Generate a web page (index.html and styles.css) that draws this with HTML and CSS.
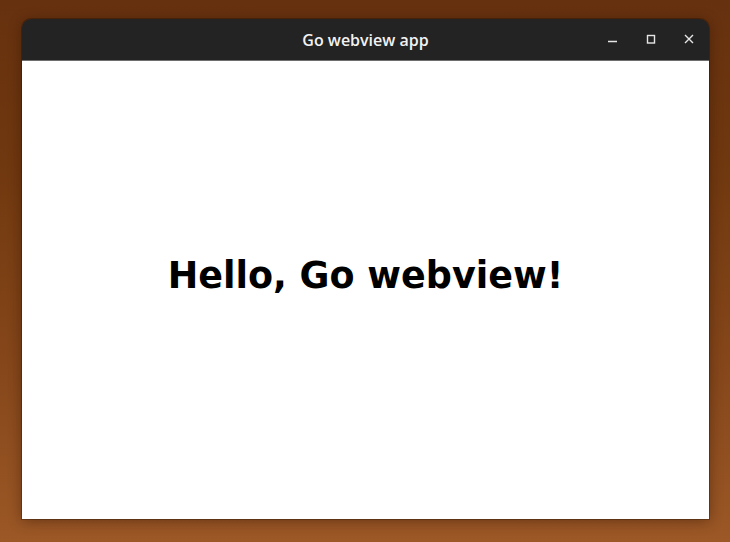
FILE: index.html
```html
<!DOCTYPE html>
<html>
<head>
<meta charset="utf-8">
<title>Go webview app</title>
<link rel="stylesheet" href="styles.css">
</head>
<body>
<div class="desktop">
  <div class="window">
    <div class="titlebar">
      <div class="title">Go webview app</div>
      <div class="controls">
        <span class="ctl">
          <svg width="12" height="12" viewBox="0 0 12 12"><path d="M1 8.5h9" stroke="#e6e6e6" stroke-width="1.4"/></svg>
        </span>
        <span class="ctl">
          <svg width="12" height="12" viewBox="0 0 12 12"><rect x="2.5" y="2.5" width="7" height="7.5" fill="none" stroke="#e6e6e6" stroke-width="1.4"/></svg>
        </span>
        <span class="ctl">
          <svg width="12" height="12" viewBox="0 0 12 12"><path d="M2 2L10 10M10 2L2 10" stroke="#e6e6e6" stroke-width="1.4"/></svg>
        </span>
      </div>
    </div>
    <div class="content">
      <h1 class="hello">Hello, Go webview!</h1>
    </div>
  </div>
</div>
</body>
</html>
```

FILE: styles.css
```css
html, body {
  margin: 0;
  padding: 0;
}
body {
  width: 730px;
  height: 542px;
  overflow: hidden;
}
.desktop {
  position: relative;
  width: 730px;
  height: 542px;
  background: linear-gradient(180deg, #66310f 0%, #70380f 30%, #87481b 70%, #9c5826 100%);
}
.window {
  position: absolute;
  left: 22px;
  top: 19px;
  width: 687px;
  height: 500px;
  display: flex;
  flex-direction: column;
  border-radius: 9px 9px 0 0;
  overflow: hidden;
  box-shadow: 0 2px 14px rgba(40, 15, 0, 0.45), 0 0 0 1px rgba(0, 0, 0, 0.25);
}
.titlebar {
  position: relative;
  height: 41px;
  flex: none;
  background: #232323;
  border-bottom: 1px solid #6e6e6e;
  display: flex;
  align-items: center;
  justify-content: center;
}
.title {
  font-family: "Open Sans", "DejaVu Sans", sans-serif;
  font-weight: 600;
  font-size: 16px;
  color: #f2f2f2;
  letter-spacing: 0;
  margin-top: 1px;
}
.controls {
  position: absolute;
  right: 14px;
  top: 14px;
  display: flex;
  gap: 26px;
}
.ctl {
  width: 12px;
  height: 12px;
  display: block;
}
.ctl svg {
  display: block;
}
.content {
  flex: 1;
  background: #ffffff;
  padding-top: 193px;
}
.hello {
  margin: 0;
  text-align: center;
  font-family: "DejaVu Sans", sans-serif;
  font-weight: 700;
  font-size: 36.5px;
  line-height: 43px;
  color: #000;
}
```
